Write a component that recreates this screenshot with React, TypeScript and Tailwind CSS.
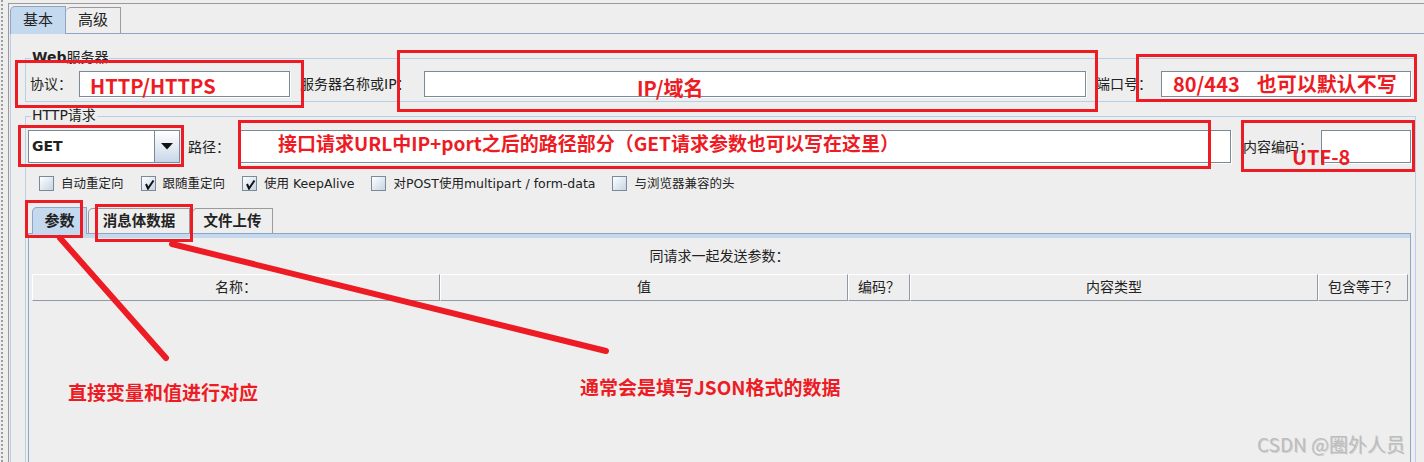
import React from "react";

function Check({ checked }: { checked?: boolean }) {
  return (
    <span className="w-[15px] h-[15px] shrink-0 border border-[#7a8a99] bg-linear-to-br from-white to-[#c6d4e4] flex items-center justify-center">
      {checked && (
        <svg width="13" height="13" viewBox="0 0 13 13">
          <path d="M4 7 L6 11.5 L11.5 3.5" stroke="#111" strokeWidth="2" fill="none" />
        </svg>
      )}
    </span>
  );
}

function CbItem({ label, checked, first }: { label: string; checked?: boolean; first?: boolean }) {
  return (
    <div className={first ? "flex items-center" : "flex items-center ml-[17px]"}>
      <Check checked={checked} />
      <span className="ml-[7px] whitespace-nowrap leading-[15px]">{label}</span>
    </div>
  );
}

const cols = [
  { label: "名称：", w: "w-[408px]" },
  { label: "值", w: "w-[408px]" },
  { label: "编码？", w: "w-[62px]" },
  { label: "内容类型", w: "w-[408px]" },
  { label: "包含等于？", w: "flex-1" },
];

export default function App() {
  return (
    <div className="relative flex w-[1424px] h-[462px] overflow-hidden bg-[#eeeeee] text-[#222] [font-family:'DejaVu_Sans','Noto_Sans_CJK_SC',sans-serif]">
      {/* dotted left edge */}
      <div className="w-[3px] shrink-0 border-r-2 border-dotted border-[#9d9d9d]" />

      {/* frame */}
      <div className="ml-[5px] mt-[3px] flex-1 flex flex-col border-t border-l border-[#9a9a9a] pt-[2px] pl-[1px]">
        {/* top tabs */}
        <div className="flex items-end h-[28px] border-b border-[#8ea6c6]">
          <div className="-mb-px h-[28px] w-[56px] flex items-center justify-center rounded-tl-[5px] border-l border-t border-r border-[#8ea6c6] bg-[#c5d9ee] text-[15px] leading-none">
            基本
          </div>
          <div className="h-[26px] w-[55px] flex items-center justify-center rounded-tl-[5px] border-t border-r border-[#9a9a9a] text-[15px] leading-none">
            高级
          </div>
        </div>
        <div className="h-[4px] bg-[#c5d9ee]" />

        {/* content */}
        <div className="flex-1 border-l border-[#b8cfe5] pl-[14px] pr-[8px] pt-[24px] text-[14px]">
          {/* Web server group */}
          <div className="relative flex items-center border border-[#b8cfe5] pt-[12px] pb-[4px] px-[4px]">
            <span className="absolute left-[5px] -top-[10px] bg-[#eeeeee] px-[1px] leading-[16px] whitespace-nowrap">
              <span className="font-bold">Web</span>服务器
            </span>
            <span className="leading-[16px] whitespace-nowrap">协议：</span>
            <div className="ml-[7px] w-[211px] h-[26px] shrink-0 bg-white border border-[#7a8a99] shadow-[1px_1px_0_#ffffff]" />
            <span className="ml-[10px] leading-[16px] whitespace-nowrap">服务器名称或IP：</span>
            <div className="ml-[13px] flex-1 h-[26px] bg-white border border-[#7a8a99] shadow-[1px_1px_0_#ffffff]" />
            <span className="ml-[10px] leading-[16px] whitespace-nowrap">端口号：</span>
            <div className="ml-[9px] w-[250px] h-[26px] shrink-0 bg-white border border-[#7a8a99] shadow-[1px_1px_0_#ffffff]" />
          </div>

          {/* HTTP request group */}
          <div className="relative mt-[14px] border-t border-l border-r border-[#b8cfe5] pt-[13px] pl-[2px] pr-[4px]">
            <span className="absolute left-[5px] -top-[10px] bg-[#eeeeee] px-[1px] leading-[16px] whitespace-nowrap">
              HTTP请求
            </span>

            {/* method / path / encoding row */}
            <div className="flex items-center h-[33px]">
              <div className="w-[152px] h-[33px] shrink-0 flex bg-white border border-[#7a8a99]">
                <span className="flex-1 flex items-center pl-[3px] font-bold text-[14px]">GET</span>
                <span className="w-[25px] h-full flex items-center justify-center border-l border-[#7a8a99] bg-linear-to-b from-white to-[#c9d7e8]">
                  <svg width="12" height="7" viewBox="0 0 12 7">
                    <path d="M0 0 L12 0 L6 6.5 Z" fill="#111" />
                  </svg>
                </span>
              </div>
              <span className="ml-[8px] leading-[16px] whitespace-nowrap">路径：</span>
              <div className="ml-[10px] flex-1 h-[33px] bg-white border border-[#7a8a99] shadow-[1px_1px_0_#ffffff]" />
              <span className="ml-[12px] leading-[16px] whitespace-nowrap">内容编码：</span>
              <div className="ml-[8px] w-[90px] h-[33px] shrink-0 bg-white border border-[#7a8a99] shadow-[1px_1px_0_#ffffff]" />
            </div>

            {/* checkboxes */}
            <div className="mt-[13px] flex items-center h-[15px] pl-[11px] text-[12.5px]">
              <CbItem first label="自动重定向" />
              <CbItem checked label="跟随重定向" />
              <CbItem checked label="使用 KeepAlive" />
              <CbItem label="对POST使用multipart / form-data" />
              <CbItem label="与浏览器兼容的头" />
            </div>

            {/* sub tabs */}
            <div className="mt-[16px] flex items-end h-[27px] border-b border-[#8ea6c6]">
              <div className="ml-[4px] -mb-px h-[27px] w-[55px] flex items-center justify-center rounded-tl-[5px] border-l border-t border-r border-[#8ea6c6] bg-[#c5d9ee] font-bold text-[15px] leading-none">
                参数
              </div>
              <div className="ml-[1px] h-[25px] w-[102px] flex items-center justify-center rounded-tl-[5px] border-l border-t border-r border-[#9a9a9a] font-bold text-[14.5px] leading-none">
                消息体数据
              </div>
              <div className="ml-[2px] h-[25px] w-[81px] flex items-center justify-center rounded-tl-[5px] border-l border-t border-r border-[#9a9a9a] font-bold text-[14.5px] leading-none">
                文件上传
              </div>
            </div>

            {/* tab panel */}
            <div className="h-[240px] border-l border-r border-[#8ea6c6]">
              <div className="h-[4px] bg-[#c5d9ee]" />
              <div className="pt-[9px] text-center leading-[18px]">同请求一起发送参数：</div>
              <div className="mt-[9px] ml-[3px] mr-[2px] flex h-[27px]">
                {cols.map((c) => (
                  <div
                    key={c.label}
                    className={
                      "flex items-center justify-center whitespace-nowrap border border-t-white border-l-white border-r-[#8f9aa6] border-b-[#8f9aa6] " +
                      c.w
                    }
                  >
                    {c.label}
                  </div>
                ))}
              </div>
            </div>
          </div>
        </div>
      </div>

      {/* annotation overlay */}
      <div className="pointer-events-none absolute inset-0 [font-family:'Noto_Sans_CJK_SC',sans-serif] font-bold text-[#ed1c24] leading-none whitespace-nowrap">
        <div className="absolute left-[15px] top-[60px] w-[289px] h-[48px] border-[3px] border-[#ed1c24]" />
        <div className="absolute left-[397px] top-[50px] w-[701px] h-[62px] border-[3px] border-[#ed1c24]" />
        <div className="absolute left-[1136px] top-[54px] w-[281px] h-[48px] border-[3px] border-[#ed1c24]" />
        <div className="absolute left-[18px] top-[125px] w-[166px] h-[42px] border-[3px] border-[#ed1c24]" />
        <div className="absolute left-[238px] top-[120px] w-[973px] h-[49px] border-[3px] border-[#ed1c24]" />
        <div className="absolute left-[1241px] top-[120px] w-[174px] h-[52px] border-[3px] border-[#ed1c24]" />
        <div className="absolute left-[25px] top-[200px] w-[58px] h-[38px] border-[3px] border-[#ed1c24]" />
        <div className="absolute left-[95px] top-[204px] w-[98px] h-[38px] border-[3px] border-[#ed1c24]" />

        <svg className="absolute left-0 top-0" width="1424" height="462" viewBox="0 0 1424 462">
          <line x1="60" y1="238" x2="166" y2="358" stroke="#ed1c24" strokeWidth="6" strokeLinecap="round" />
          <line x1="172" y1="244" x2="606" y2="351" stroke="#ed1c24" strokeWidth="6" strokeLinecap="round" />
        </svg>

        <span className="absolute left-[90px] top-[76px] text-[20px]">HTTP/HTTPS</span>
        <span className="absolute left-[637px] top-[78px] text-[20px]">IP/域名</span>
        <span className="absolute left-[1173px] top-[74px] text-[20px]">
          80/443<span className="ml-[17px]">也可以默认不写</span>
        </span>
        <span className="absolute left-[278px] top-[133px] text-[19px]">
          接口请求URL中IP+port之后的路径部分（GET请求参数也可以写在这里）
        </span>
        <span className="absolute left-[1292px] top-[147px] text-[20px]">UTF-8</span>
        <span className="absolute left-[68px] top-[382px] text-[19px]">直接变量和值进行对应</span>
        <span className="absolute left-[580px] top-[377px] text-[19px]">通常会是填写JSON格式的数据</span>
      </div>

      {/* watermark */}
      <span className="pointer-events-none absolute left-[1257px] top-[434px] text-[19px] leading-none whitespace-nowrap text-[#bdbdbd] [font-family:'Noto_Sans_CJK_SC',sans-serif] [text-shadow:1px_1px_0_rgba(0,0,0,0.15)]">
        CSDN @圈外人员
      </span>
    </div>
  );
}
